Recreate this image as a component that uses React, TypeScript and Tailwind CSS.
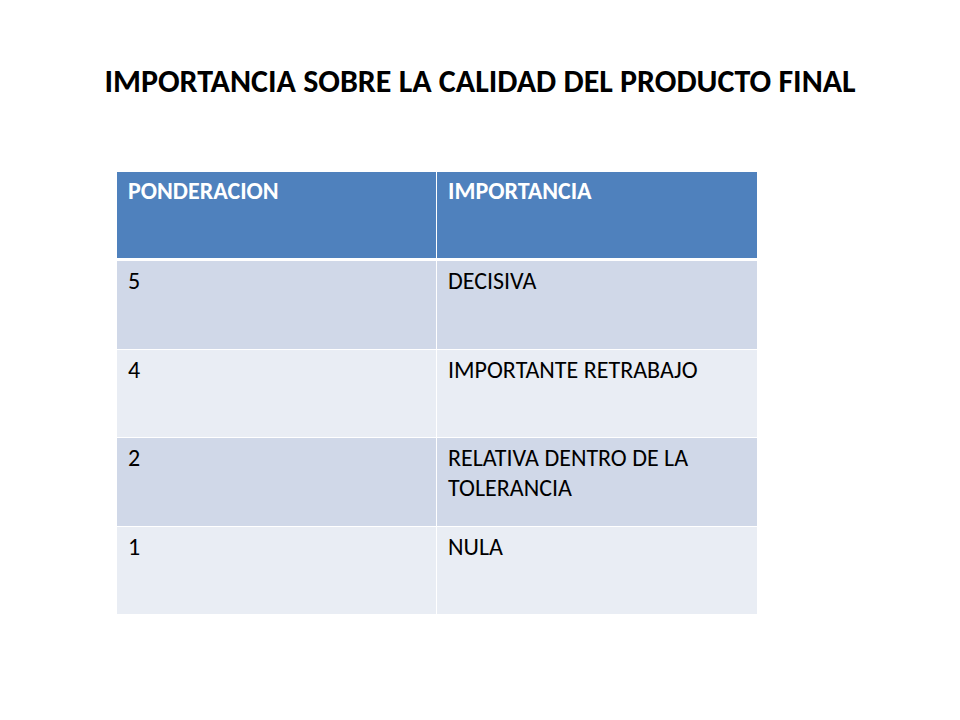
import React from 'react';

type Row = {
  weight: string;
  label: string;
  height: string;
  bg: string;
};

const rows: Row[] = [
  { weight: '5', label: 'DECISIVA', height: 'h-[88px]', bg: 'bg-[#d0d8e8]' },
  { weight: '4', label: 'IMPORTANTE RETRABAJO', height: 'h-[87px]', bg: 'bg-[#e9edf4]' },
  { weight: '2', label: 'RELATIVA DENTRO DE LA TOLERANCIA', height: 'h-[88px]', bg: 'bg-[#d0d8e8]' },
  { weight: '1', label: 'NULA', height: 'h-[87px]', bg: 'bg-[#e9edf4]' },
];

export default function App() {
  return (
    <div
      className="w-[960px] h-[720px] bg-white text-black flex flex-col"
      style={{ fontFamily: '"Carlito", "Lato", sans-serif' }}
    >
      {/* Title */}
      <h1 className="pt-[62px] text-center text-[32px] leading-[40px] font-bold">
        IMPORTANCIA SOBRE LA CALIDAD DEL PRODUCTO FINAL
      </h1>

      {/* Table */}
      <div className="mt-[70px] ml-[117px] w-[640px] flex flex-col gap-px bg-white">
        <div className="grid grid-cols-[319px_320px] gap-px h-[86px] mb-[2px]">
          <div className="bg-[#4f81bd] text-white font-bold text-[24px] leading-[30px] pl-[11px] pt-[4px]">
            PONDERACION
          </div>
          <div className="bg-[#4f81bd] text-white font-bold text-[24px] leading-[30px] pl-[11px] pt-[4px]">
            IMPORTANCIA
          </div>
        </div>
        {rows.map((r) => (
          <div key={r.weight} className={`grid grid-cols-[319px_320px] gap-px ${r.height}`}>
            <div className={`${r.bg} text-[24px] leading-[30px] pl-[11px] pt-[5px]`}>{r.weight}</div>
            <div className={`${r.bg} text-[24px] leading-[30px] pl-[11px] pr-[40px] pt-[5px]`}>{r.label}</div>
          </div>
        ))}
      </div>
    </div>
  );
}
